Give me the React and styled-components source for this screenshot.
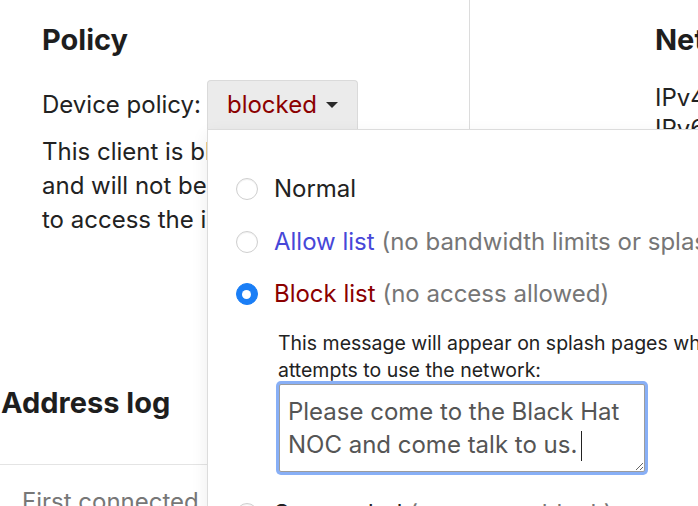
import React, { useEffect, useRef } from 'react';
import styled, { createGlobalStyle } from 'styled-components';

const GlobalStyle = createGlobalStyle`
  html, body {
    margin: 0;
    padding: 0;
    background: #fff;
    overflow: hidden;
  }
  body {
    font-family: Inter, "Noto Sans", "Liberation Sans", sans-serif;
    color: #222;
  }
  * {
    box-sizing: border-box;
  }
`;

const Page = styled.div`
  width: 100%;
  min-height: 100vh;
`;

const TopGrid = styled.div`
  display: grid;
  grid-template-columns: 470px 1fr;
  min-height: 370px;
`;

const LeftCol = styled.section`
  padding: 23px 20px 0 42px;
  border-right: 1px solid #dcdcdc;
`;

const RightCol = styled.section`
  padding: 23px 0 0 185px;
  white-space: nowrap;
  overflow: hidden;
`;

const SectionTitle = styled.h2`
  margin: 0;
  font-size: 29px;
  line-height: 34px;
  font-weight: 700;
  color: #1e1e1e;
  white-space: nowrap;
`;

const PolicyRow = styled.div`
  display: flex;
  align-items: center;
  gap: 6px;
  margin-top: 23px;
  font-size: 24px;
  white-space: nowrap;
`;

const DropdownWrap = styled.div`
  position: relative;
`;

const DropdownButton = styled.button`
  display: flex;
  align-items: center;
  height: 49px;
  padding: 7px 19px 8px 19px;
  border: 1px solid #dadada;
  border-bottom: none;
  border-radius: 4px 4px 0 0;
  background: #ebebeb;
  font-family: inherit;
  font-size: 24px;
  line-height: 33px;
  color: #8b0000;
  cursor: pointer;
`;

const Caret = styled.span`
  display: inline-block;
  margin-left: 9px;
  width: 0;
  height: 0;
  border-left: 6px solid transparent;
  border-right: 6px solid transparent;
  border-top: 6px solid #2a2a2a;
`;

const Para = styled.p`
  margin: 6px 0 0;
  font-size: 24px;
  line-height: 34px;
  white-space: nowrap;
`;

const InfoList = styled.div`
  margin-top: 25px;
  font-size: 24px;
  line-height: 31px;
`;

const Popup = styled.div`
  position: absolute;
  top: 100%;
  left: 0;
  z-index: 10;
  width: 620px;
  padding: 42px 28px 40px 28px;
  background: #fff;
  border: 1px solid #dcdcdc;
  box-shadow: 0 6px 16px rgba(0, 0, 0, 0.08);
`;

const Option = styled.label`
  display: flex;
  align-items: center;
  gap: 16px;
  margin-top: ${(p) => (p.$first ? '0' : '18.5px')};
  font-size: 24px;
  line-height: 34px;
  white-space: nowrap;
  cursor: pointer;
`;

const Radio = styled.input.attrs({ type: 'radio' })`
  appearance: none;
  -webkit-appearance: none;
  flex: none;
  margin: 0;
  width: 22px;
  height: 22px;
  border-radius: 50%;
  border: 1px solid #cfcfcf;
  background: #fff;
  box-shadow: inset 0 1px 1px rgba(0, 0, 0, 0.06);
  position: relative;

  &:checked {
    border-color: #1a7ef6;
    background: #1a7ef6;
    box-shadow: none;
  }
  &:checked::after {
    content: '';
    position: absolute;
    left: 50%;
    top: 50%;
    width: 9px;
    height: 9px;
    margin: -4.5px 0 0 -4.5px;
    border-radius: 50%;
    background: #fff;
  }
`;

const OptionName = styled.span`
  color: ${(p) => p.$color || '#222'};
`;

const OptionNote = styled.span`
  color: #767676;
`;

const SubBlock = styled.div`
  padding-left: 42px;
  margin-top: 18.5px;
  margin-bottom: 25px;
`;

const Message = styled.div`
  font-size: 19.5px;
  line-height: 27px;
  color: #222;
  white-space: nowrap;
`;

const InputWrap = styled.div`
  position: relative;
  width: 366px;
  margin-left: 1px;
`;

const MessageInput = styled.textarea`
  display: block;
  margin: 0;
  width: 366px;
  height: 88px;
  padding: 10px 8px;
  border: 1px solid #9c9c9c;
  border-radius: 2px;
  outline: none;
  box-shadow: 0 0 0 3px #88aff6;
  font-family: inherit;
  font-size: 24px;
  line-height: 33px;
  color: #555;
  background: #fff;
  resize: both;
`;

const FakeCaret = styled.span`
  position: absolute;
  left: 302px;
  top: 47px;
  width: 1.5px;
  height: 30px;
  background: #222;
  pointer-events: none;
`;

const LogSection = styled.section`
  margin-top: 16px;
`;

const LogTitle = styled(SectionTitle)`
  padding-left: 1px;
`;

const LogTable = styled.table`
  width: 100%;
  margin-top: 44px;
  border-collapse: collapse;
`;

const HeadCell = styled.th`
  border-top: 1px solid #e4e4e4;
  padding: 20px 19px 10px 22px;
  text-align: left;
  font-weight: 400;
  font-size: 24px;
  line-height: 34px;
  color: #777;
  white-space: nowrap;
`;

const App = () => {
  const areaRef = useRef(null);
  const message = 'Please come to the Black Hat NOC and come talk to us.';

  useEffect(() => {
    const el = areaRef.current;
    if (el) {
      el.focus();
      el.setSelectionRange(message.length, message.length);
    }
  }, []);

  return (
    <Page>
      <GlobalStyle />
      <TopGrid>
        <LeftCol>
          <SectionTitle>Policy</SectionTitle>
          <PolicyRow>
            <span>Device policy:</span>
            <DropdownWrap>
              <DropdownButton>
                blocked
                <Caret />
              </DropdownButton>
              <Popup>
                <Option $first>
                  <Radio name="policy" />
                  <OptionName>Normal</OptionName>
                </Option>
                <Option>
                  <Radio name="policy" />
                  <span>
                    <OptionName $color="#4747d8">Allow list</OptionName>{' '}
                    <OptionNote>(no bandwidth limits or splash page)</OptionNote>
                  </span>
                </Option>
                <Option>
                  <Radio name="policy" defaultChecked />
                  <span>
                    <OptionName $color="#8b0000">Block list</OptionName>{' '}
                    <OptionNote>(no access allowed)</OptionNote>
                  </span>
                </Option>
                <SubBlock>
                  <Message>
                    This message will appear on splash pages when this client
                    <br />
                    attempts to use the network:
                  </Message>
                  <InputWrap>
                    <MessageInput ref={areaRef} defaultValue={message} />
                    <FakeCaret />
                  </InputWrap>
                </SubBlock>
                <Option $first>
                  <Radio name="policy" />
                  <span>
                    <OptionName>Suspended</OptionName>{' '}
                    <OptionNote>(temporary block)</OptionNote>
                  </span>
                </Option>
              </Popup>
            </DropdownWrap>
          </PolicyRow>
          <Para>
            This client is blocked by the network
            <br />
            and will not be allowed
            <br />
            to access the internet.
          </Para>
        </LeftCol>
        <RightCol>
          <SectionTitle>Network</SectionTitle>
          <InfoList>
            <div>IPv4: 10.100.23.41</div>
            <div>IPv6: fe80::1c2b:9aff</div>
            <div>MAC: 3c:22:fb:4a:10:8e</div>
            <div>Hostname: guest-laptop</div>
          </InfoList>
        </RightCol>
      </TopGrid>
      <LogSection>
        <LogTitle>Address log</LogTitle>
        <LogTable>
          <thead>
            <tr>
              <HeadCell>First connected</HeadCell>
              <HeadCell>Last seen</HeadCell>
              <HeadCell>Address</HeadCell>
            </tr>
          </thead>
        </LogTable>
      </LogSection>
    </Page>
  );
};

export default App;
